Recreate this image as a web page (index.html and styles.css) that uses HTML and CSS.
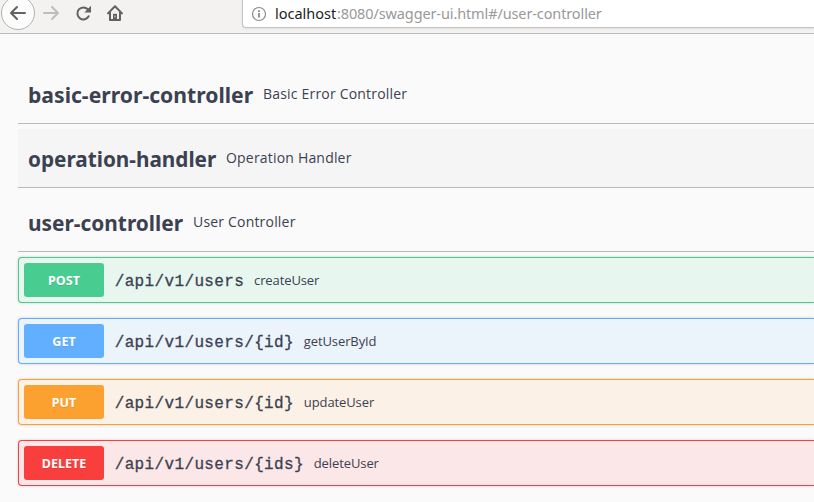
FILE: index.html
```html
<!DOCTYPE html>
<html lang="en">
<head>
<meta charset="utf-8">
<title>Swagger UI</title>
<link rel="stylesheet" href="styles.css">
</head>
<body>
<header class="toolbar">
  <svg class="nav-icons" width="130" height="33" viewBox="0 0 130 33" fill="none">
    <circle cx="18" cy="13" r="16.5" fill="#fcfcfc" stroke="#b2b2b0"/>
    <path d="M25 13H11M17 7l-6 6 6 6" stroke="#62625f" stroke-width="2" stroke-linecap="round" stroke-linejoin="round"/>
    <path d="M44 13h14M52 7l6 6-6 6" stroke="#bdbdbb" stroke-width="2" stroke-linecap="round" stroke-linejoin="round"/>
    <path d="M88.7 16.2A6 6 0 1 1 87.8 9.3" stroke="#62625f" stroke-width="2" stroke-linecap="round"/>
    <path d="M91 5.8v6.7h-6.7z" fill="#62625f"/>
    <path d="M108 13.4l7-7.1 7 7.1M110 12.5V20h10v-7.5" stroke="#62625f" stroke-width="2" stroke-linecap="round" stroke-linejoin="round"/>
    <path d="M113 20v-6.2h4V20z" fill="#62625f"/>
    <path d="M115 15.6v1.8" stroke="#d8d8d6" stroke-width="1"/>
  </svg>
  <div class="address">
    <svg class="info" width="16" height="16" viewBox="0 0 16 16" fill="none">
      <circle cx="8" cy="8" r="6.5" stroke="#8b8b8b" stroke-width="1.2"/>
      <path d="M8 7v4.5M8 4.3v1.6" stroke="#808080" stroke-width="1.7"/>
    </svg>
    <span class="url"><span class="host">localhost</span><span class="path-part">:8080/swagger-ui.html#/user-controller</span></span>
  </div>
</header>
<main class="content">
  <section class="tag"><h2 class="tag-name t-basic">basic-error-controller</h2><span class="tag-desc">Basic Error Controller</span></section>
  <section class="tag hovered"><h2 class="tag-name t-operation">operation-handler</h2><span class="tag-desc">Operation Handler</span></section>
  <section class="tag"><h2 class="tag-name t-user">user-controller</h2><span class="tag-desc">User Controller</span></section>
  <div class="operations">
    <div class="op post"><span class="method">POST</span><span class="route">/api/v1/users</span><span class="summary">createUser</span></div>
    <div class="op get"><span class="method">GET</span><span class="route">/api/v1/users/{id}</span><span class="summary">getUserById</span></div>
    <div class="op put"><span class="method">PUT</span><span class="route">/api/v1/users/{id}</span><span class="summary">updateUser</span></div>
    <div class="op delete"><span class="method">DELETE</span><span class="route">/api/v1/users/{ids}</span><span class="summary">deleteUser</span></div>
  </div>
</main>
</body>
</html>
```
FILE: styles.css
```css
* { box-sizing: border-box; }
body {
  margin: 0;
  height: 502px;
  overflow: hidden;
  background: #fafafa;
  color: #3b4151;
  font-family: "Open Sans", sans-serif;
}
.toolbar {
  display: flex;
  height: 34px;
  background: #f3f2f1;
  border-bottom: 1px solid #bcbcbc;
}
.nav-icons { flex: none; }
.address {
  display: flex;
  align-items: center;
  flex: 1;
  height: 28px;
  margin-left: 112px;
  padding-left: 8px;
  background: #fff;
  border: 1px solid #c4c4c2;
  border-top: 0;
  border-right: 0;
  border-radius: 0 0 0 4px;
  box-shadow: 0 1px 2px rgba(0, 0, 0, .08);
}
.info { flex: none; margin-right: 8px; }
.url { margin-top: -1px; font: 14.5px "Noto Sans", sans-serif; white-space: nowrap; }
.host { display: inline-block; width: 62px; color: #222; }
.path-part { color: #999; letter-spacing: -.12px; }
.content { padding: 31px 0 0 18px; }
.tag {
  display: flex;
  align-items: center;
  height: 59px;
  margin-bottom: 5px;
  padding: 1px 0 0 10px;
  border-bottom: 1px solid #bababa;
}
.hovered { background: #f5f5f5; }
.tag-name {
  margin: -1px 0 0;
  font: bold 22px "Noto Sans", sans-serif;
  white-space: nowrap;
  transform-origin: left;
}
.t-basic { width: 225px; transform: scaleX(.961); }
.t-operation { width: 188px; transform: scaleX(.942); }
.t-user { width: 155px; transform: scaleX(.948); }
.tag-desc { margin: -2px 0 0 10px; font-size: 14px; letter-spacing: .19px; }
.operations { display: grid; gap: 15px; }
.op {
  display: flex;
  align-items: center;
  height: 46px;
  padding: 5px;
  border: 1px solid var(--c);
  border-right: 0;
  border-radius: 4px 0 0 4px;
  background: var(--bg);
  box-shadow: 0 0 3px rgba(0, 0, 0, .19);
}
.post { --c: #49cc90; --bg: #e7f6ee; }
.get { --c: #61affe; --bg: #ebf3fb; }
.put { --c: #fca130; --bg: #fbf1e6; }
.delete { --c: #f93e3e; --bg: #fbe7e7; }
.method {
  width: 80px;
  height: 34px;
  border-radius: 3px;
  background: var(--c);
  color: #fff;
  font: bold 12.5px/35px "Noto Sans", sans-serif;
  text-align: center;
  text-shadow: 0 1px 0 rgba(0, 0, 0, .1);
}
.route {
  margin: 3px 0 0 10.7px;
  font: 16px "Liberation Mono", monospace;
  letter-spacing: .36px;
  -webkit-text-stroke: .3px #3b4151;
}
.summary { margin-left: 9.8px; font-size: 13px; letter-spacing: -.1px; }
```
